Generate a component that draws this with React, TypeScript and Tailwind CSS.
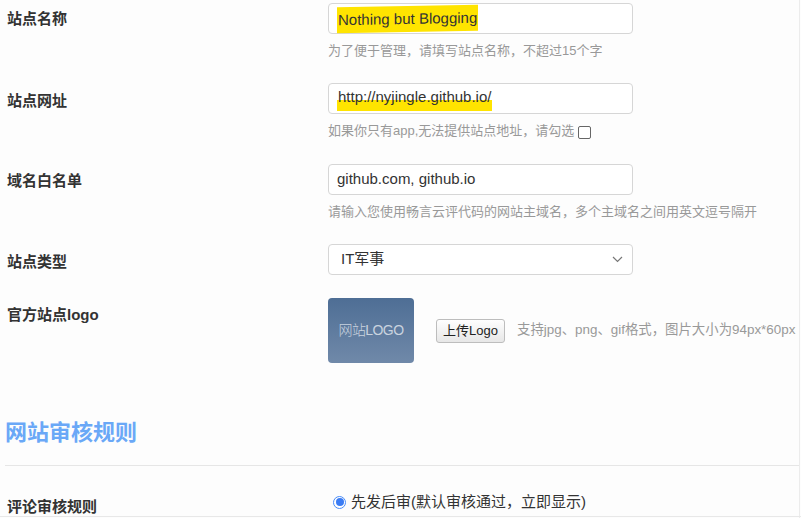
const font = { fontFamily: '"Liberation Sans", "Noto Sans CJK SC", sans-serif' };

function Label({ children, className = "" }: { children: React.ReactNode; className?: string }) {
  return (
    <div className={`w-[321px] shrink-0 text-[15px] font-bold text-[#333] ${className}`}>{children}</div>
  );
}

function Input({ value, mark }: { value: string; mark?: "full" | "low" }) {
  return (
    <div className="w-[305px] h-[31px] border border-[#d6d6d6] rounded-[4px] bg-white flex items-center pl-[8px] text-[15px] text-[#333]">
      {mark === "full" ? (
        <span className="bg-[#ffe400] pt-[2px] pb-[1px] px-[1px] -skew-y-1">{value}</span>
      ) : mark === "low" ? (
        <span className="bg-[linear-gradient(to_bottom,transparent_55%,#ffe400_55%)] pb-[2px] px-[1px]">{value}</span>
      ) : (
        <span>{value}</span>
      )}
    </div>
  );
}

export default function App() {
  return (
    <div className="w-[801px] h-[518px] overflow-hidden bg-[#fdfdfd] relative" style={font}>
      <div className="absolute top-0 right-[1px] w-px h-full bg-[#ececec]"></div>
      <div className="pl-[7px] pt-[3px] pr-[2px]">
        {/* 站点名称 */}
        <div className="flex">
          <Label className="leading-[31px]">站点名称</Label>
          <div>
            <Input value="Nothing but Blogging" mark="full" />
            <div className="mt-[8px] text-[13px] leading-[18px] text-[#999]">为了便于管理，请填写站点名称，不超过15个字</div>
          </div>
        </div>

        {/* 站点网址 */}
        <div className="flex mt-[23px]">
          <Label className="leading-[31px] pt-[2px]">站点网址</Label>
          <div>
            <Input value="http://nyjingle.github.io/" mark="low" />
            <div className="mt-[8px] text-[13px] leading-[18px] text-[#999] flex items-center">
              如果你只有app,无法提供站点地址，请勾选
              <span className="inline-block w-[13px] h-[13px] border border-[#666] rounded-[2px] ml-[4px] mt-[3px] bg-white"></span>
            </div>
          </div>
        </div>

        {/* 域名白名单 */}
        <div className="flex mt-[24px]">
          <Label className="leading-[31px] pt-[1px]">域名白名单</Label>
          <div>
            <Input value="github.com, github.io" />
            <div className="mt-[8px] text-[13px] leading-[18px] text-[#999]">请输入您使用畅言云评代码的网站主域名，多个主域名之间用英文逗号隔开</div>
          </div>
        </div>

        {/* 站点类型 */}
        <div className="flex mt-[23px]">
          <Label className="leading-[31px] pt-[2px]">站点类型</Label>
          <div className="w-[305px] h-[31px] border border-[#d6d6d6] rounded-[4px] bg-white flex items-center justify-between pl-[12px] pr-[9px] text-[15px] text-[#333]">
            <span>IT军事</span>
            <svg width="11" height="7" viewBox="0 0 11 7">
              <path d="M1 1l4.5 4.5L10 1" fill="none" stroke="#777" strokeWidth="1.2" />
            </svg>
          </div>
        </div>

        {/* 官方站点logo */}
        <div className="flex mt-[21px]">
          <Label className="pt-[6px]">官方站点logo</Label>
          <div className="flex items-center">
            <div className="w-[86px] h-[65px] rounded-[4px] bg-[linear-gradient(to_bottom,#4e6e95,#7089a9)] flex items-center justify-center text-[14px] text-[#c9d3df] font-light tracking-[-0.6px]">
              网站LOGO
            </div>
            <button className="ml-[22px] h-[24px] w-[69px] border border-[#bdbdbd] rounded-[3px] bg-[linear-gradient(to_bottom,#fefefe,#e7e7e7)] text-[13px] text-[#222]">
              上传Logo
            </button>
            <span className="ml-[12px] text-[13.4px] text-[#999] whitespace-nowrap">支持jpg、png、gif格式，图片大小为94px*60px</span>
          </div>
        </div>

        {/* 网站审核规则 */}
        <div className="mt-[55px] text-[22px] font-bold text-[#6aa8f7] leading-[30px] -ml-[2px]">网站审核规则</div>
        <div className="mt-[17px] -ml-[2px] h-px bg-[#e6e6e6]"></div>

        <div className="flex mt-[28px]">
          <Label className="pt-[2px]">评论审核规则</Label>
          <div className="flex items-center -mt-[8px] ml-[5px]">
            <span className="w-[13px] h-[13px] rounded-full border border-[#4a8cf7] flex items-center justify-center bg-white">
              <span className="w-[8px] h-[8px] rounded-full bg-[#3b7cf4]"></span>
            </span>
            <span className="ml-[5px] text-[15px] text-[#333]">先发后审(默认审核通过，立即显示)</span>
          </div>
        </div>
      </div>
      <div className="absolute left-0 right-0 bottom-[1px] h-px bg-[#e8e8e8]"></div>
    </div>
  );
}
